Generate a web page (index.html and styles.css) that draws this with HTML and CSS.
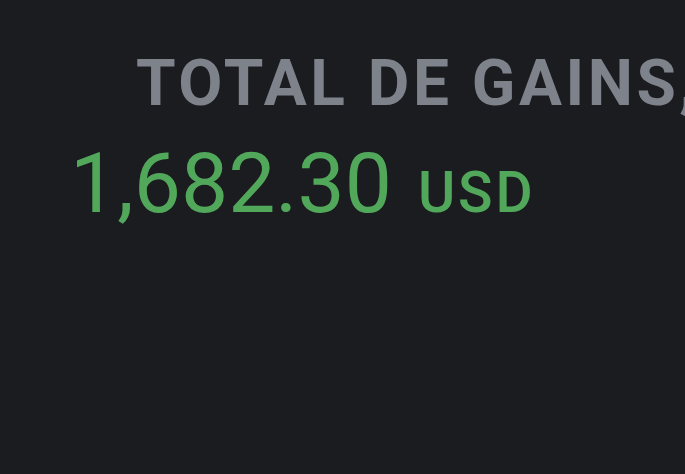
FILE: index.html
```html
<!DOCTYPE html>
<html lang="fr">
<head>
<meta charset="utf-8">
<link rel="stylesheet" href="styles.css">
</head>
<body>
<div class="card">
  <div class="title">TOTAL DE GAINS, USD</div>
  <div class="amount"><span class="value">1,682.30</span><span class="currency">USD</span></div>
</div>
</body>
</html>
```
FILE: styles.css
```css
html, body {
  margin: 0;
  padding: 0;
  background: #1b1c20;
  width: 685px;
  height: 474px;
  overflow: hidden;
}
.card {
  display: flex;
  flex-direction: column;
  gap: 26px;
  padding: 52px 0 0 0;
  font-family: Roboto, "Liberation Sans", sans-serif;
}
.title {
  padding-left: 136px;
  font-size: 64px;
  line-height: 64px;
  font-weight: 700;
  letter-spacing: 0.055em;
  color: #7e828a;
  white-space: nowrap;
}
.amount {
  padding-left: 70px;
  display: flex;
  align-items: baseline;
  gap: 26px;
  color: #52a85a;
  line-height: 84px;
  white-space: nowrap;
}
.value {
  font-size: 84px;
  font-weight: 400;
}
.currency {
  font-size: 57px;
  font-weight: 500;
  letter-spacing: 0.05em;
}
```
